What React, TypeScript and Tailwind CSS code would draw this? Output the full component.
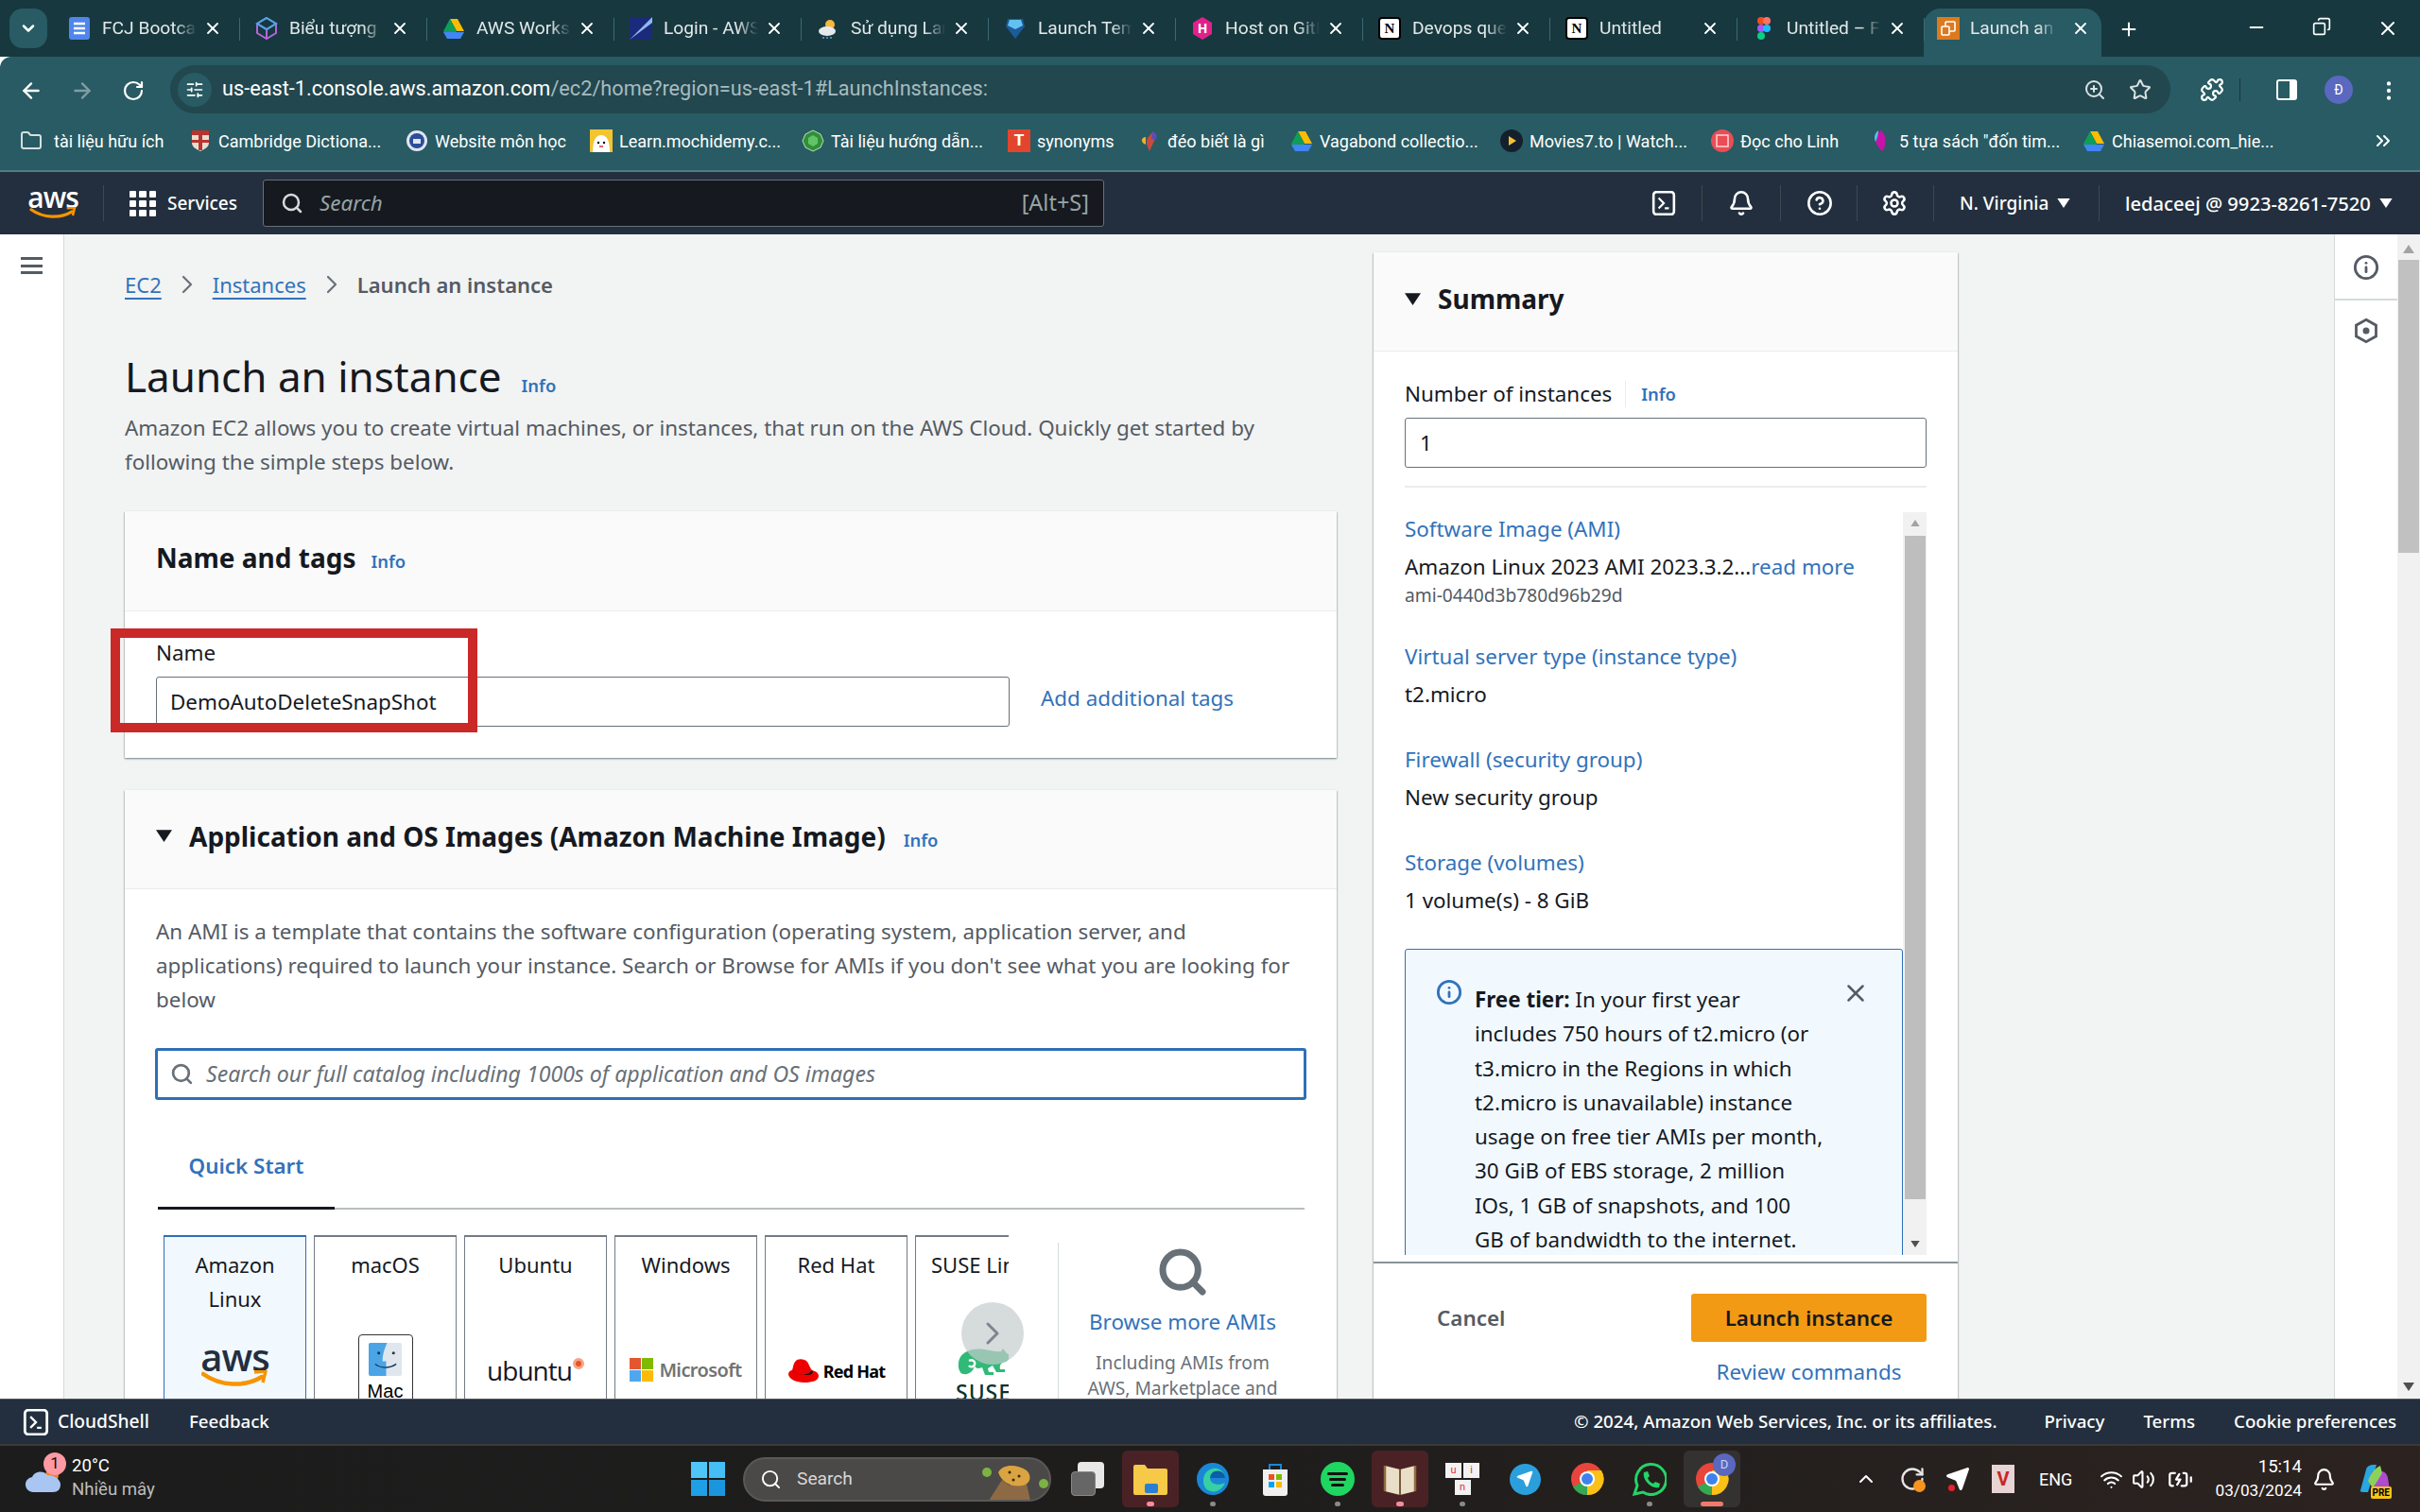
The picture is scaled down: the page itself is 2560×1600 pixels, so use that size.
import React from "react";
import { ArrowLeft, ArrowRight, RotateCw, ZoomIn, Star, Puzzle, MoreVertical, SlidersHorizontal, ChevronRight, ChevronsRight, ChevronDown, Search, X, Plus, Minus, Copy, Bell, Settings, CircleHelp, Info, Folder, ChevronUp, Wifi, Volume2, BatteryCharging, Send } from "lucide-react";

const BLUE = "text-[#3272ba]";

function AwsLogo({ dark, className }: { dark?: boolean; className?: string }) {
  return (
    <span className={`relative inline-flex flex-col items-center ${className ?? ""}`}>
      <span className={`font-['Open_Sans',sans-serif] font-semibold leading-none tracking-[-1px] ${dark ? "text-[#232f3e] text-[40px]" : "text-white text-[30px]"}`}>aws</span>
      <svg viewBox="0 0 70 20" className={dark ? "w-[70px] h-[20px] -mt-[6px]" : "w-[52px] h-[14px] -mt-[5px]"}>
        <path d="M2 4c18 13 44 14 62 3" fill="none" stroke="#f79400" strokeWidth="4.5" strokeLinecap="round" />
        <path d="M56 2l12-1-3 12" fill="none" stroke="#f79400" strokeWidth="3.5" strokeLinejoin="round" />
      </svg>
    </span>
  );
}

function Fav({ k }: { k: string }) {
  const c = "w-[24px] h-[24px] shrink-0";
  switch (k) {
    case "doc":
      return <svg viewBox="0 0 24 24" className={c}><rect x="1" y="0" width="22" height="24" rx="3" fill="#4f86ec" /><path d="M6 7h12M6 12h12M6 17h12" stroke="#fff" strokeWidth="2.4" /></svg>;
    case "box":
      return <svg viewBox="0 0 24 24" className={c}><path d="M12 1l10 6v10l-10 6-10-6V7z M2 7l10 6 10-6M12 13v10" fill="none" stroke="#b565d8" strokeWidth="2" /><path d="M12 1l10 6-10 6-10-6z" fill="none" stroke="#4aa8e8" strokeWidth="2" /></svg>;
    case "drive":
      return <svg viewBox="0 0 24 24" className={c}><path d="M8 2h8l7 13h-8z" fill="#fbbc04" /><path d="M8 2l7 13-4 7H7L1 15z" fill="#0f9d58" /><path d="M1 16h22l-4 7H5z" fill="#4285f4" /></svg>;
    case "login":
      return <svg viewBox="0 0 24 24" className={c}><rect x="0" y="0" width="24" height="24" fill="#1b2a7a" /><path d="M0 24C8 16 16 8 24 0v6C16 12 8 18 0 24z" fill="#8fb8f0" /></svg>;
    case "weather":
      return <svg viewBox="0 0 24 24" className={c}><circle cx="14" cy="8" r="5" fill="#f6b73c" /><ellipse cx="11" cy="15" rx="9" ry="5" fill="#e6e9ec" /><path d="M7 21v2M11 21v2M15 21v2" stroke="#5aa5e0" strokeWidth="1.5" /></svg>;
    case "gem":
      return <svg viewBox="0 0 24 24" className={c}><path d="M4 2h16l2 8-10 13L2 10z" fill="#1c5a9a" /><path d="M6 3h12l2 6-8 4-8-4z" fill="#62c1f0" /></svg>;
    case "hex":
      return <svg viewBox="0 0 24 24" className={c}><path d="M12 0l10 6v12l-10 6-10-6V6z" fill="#e0218a" /><text x="12" y="17" textAnchor="middle" fontSize="14" fontWeight="700" fill="#fff" fontFamily="Open Sans">H</text></svg>;
    case "notion":
      return <span className={`${c} flex items-center justify-center rounded-[4px] bg-white border-2 border-black text-black text-[15px] font-bold font-['Liberation_Serif',serif]`}>N</span>;
    case "figma":
      return <svg viewBox="0 0 16 24" className={c}><circle cx="5" cy="4" r="4" fill="#f24e1e" /><circle cx="11" cy="4" r="4" fill="#ff7262" /><circle cx="5" cy="12" r="4" fill="#a259ff" /><circle cx="11" cy="12" r="4" fill="#1abcfe" /><circle cx="5" cy="20" r="4" fill="#0acf83" /></svg>;
    case "awsorange":
      return <svg viewBox="0 0 24 24" className={c}><rect width="24" height="24" fill="#dd7a1e" /><rect x="9" y="5" width="10" height="10" rx="1" fill="none" stroke="#fff" strokeWidth="1.6" /><rect x="5" y="10" width="8" height="9" rx="1" fill="#dd7a1e" stroke="#fff" strokeWidth="1.6" /></svg>;
    case "cam":
      return <svg viewBox="0 0 24 24" className={c}><path d="M3 1h18v13c0 5-5 7-9 9-4-2-9-4-9-9z" fill="#e8ddd0" /><path d="M3 1h18v5H3zM10 6h4v16h-4zM3 11h18v3H3z" fill="#b8352e" /></svg>;
    case "web":
      return <svg viewBox="0 0 24 24" className={c}><circle cx="12" cy="12" r="11" fill="#dfe6f2" /><circle cx="12" cy="12" r="8" fill="#2b4d9a" /><rect x="8" y="10" width="8" height="5" fill="#dfe6f2" /></svg>;
    case "mochi":
      return <svg viewBox="0 0 24 24" className={c}><rect width="24" height="24" fill="#f4c430" /><path d="M12 6c6 0 9 6 9 18H3C3 12 6 6 12 6z" fill="#fff" /><circle cx="9" cy="14" r="1.2" /><circle cx="15" cy="14" r="1.2" /><path d="M10 18h4" stroke="#d33" strokeWidth="1.5" /></svg>;
    case "emerald":
      return <svg viewBox="0 0 24 24" className={c}><path d="M12 1l8 4 3 7-3 7-8 4-8-4-3-7 3-7z" fill="#2f8f3b" stroke="#bde3b0" /><path d="M12 6l5 3v6l-5 3-5-3V9z" fill="#62c465" /></svg>;
    case "syn":
      return <span className={`${c} flex items-center justify-center bg-[#e2452d] text-white text-[17px] font-extrabold`}>T</span>;
    case "flower":
      return <svg viewBox="0 0 24 24" className={c}><path d="M12 23c-3-6-4-10-2-14l6-7 2 8-6 13z" fill="#c94a3d" /><path d="M8 8C3 8 2 14 8 16z" fill="#e8b32a" /><path d="M15 3c5 0 6 5 3 8l-4-1z" fill="#5b4bc0" /></svg>;
    case "movie":
      return <svg viewBox="0 0 24 24" className={c}><circle cx="12" cy="12" r="12" fill="#15202e" /><path d="M9 7l8 5-8 5z" fill="#f4c430" /></svg>;
    case "linh":
      return <svg viewBox="0 0 24 24" className={c}><circle cx="12" cy="12" r="12" fill="#ea4d55" /><rect x="6" y="6" width="12" height="12" fill="none" stroke="#ffd6d8" strokeWidth="1.5" /></svg>;
    case "book5":
      return <svg viewBox="0 0 24 24" className={c}><path d="M12 1c5 4 6 13 2 22-5-3-8-8-8-13 0-4 2-7 6-9z" fill="#c712a8" /><path d="M9 1C5 4 4 9 6 13c2-4 3-8 3-12z" fill="#4cc3f0" /></svg>;
    default:
      return null;
  }
}

function Tab({ icon, text }: { icon: string; text: string }) {
  return (
    <div className="w-[198px] h-[60px] shrink-0 flex items-center pl-[12px] relative">
      <Fav k={icon} />
      <span className="ml-[12px] w-[100px] overflow-hidden whitespace-nowrap text-[19.2px] text-[#e3e8e9] [mask-image:linear-gradient(90deg,#000_78%,transparent)]">{text}</span>
      <X className="ml-[7px] w-[20px] h-[20px] text-white" strokeWidth={2.2} />
      <span className="absolute right-[4px] top-[19px] w-[1px] h-[24px] bg-[#3b6a72]" />
    </div>
  );
}

const tabs: [string, string][] = [
  ["doc", "FCJ Bootcamp"], ["box", "Biểu tượng"], ["drive", "AWS Workshop"], ["login", "Login - AWS"], ["weather", "Sử dụng Lambda"],
  ["gem", "Launch Template"], ["hex", "Host on GitHub"], ["notion", "Devops quest"], ["notion", "Untitled"], ["figma", "Untitled – Figma"],
];

const marks: [string, string, string][] = [
  ["cam", "Cambridge Dictiona...", "w-[229px]"],
  ["web", "Website môn học", "w-[195px]"],
  ["mochi", "Learn.mochidemy.c...", "w-[224px]"],
  ["emerald", "Tài liệu hướng dẫn...", "w-[218px]"],
  ["syn", "synonyms", "w-[138px]"],
  ["flower", "đéo biết là gì", "w-[161px]"],
  ["drive", "Vagabond collectio...", "w-[222px]"],
  ["movie", "Movies7.to | Watch...", "w-[223px]"],
  ["linh", "Đọc cho Linh", "w-[168px]"],
  ["book5", "5 tựa sách \"đốn tim...", "w-[225px]"],
  ["drive", "Chiasemoi.com_hie...", "w-[240px]"],
];

function NavDiv() {
  return <span className="block w-[1px] h-[38px] bg-[#414750]" />;
}

function CloudShellIcon({ className }: { className?: string }) {
  return (
    <svg viewBox="0 0 24 24" className={className}>
      <rect x="2" y="1" width="20" height="22" rx="3" fill="none" stroke="#fff" strokeWidth="2.4" />
      <path d="M7 7l5 5-5 5M13 17h4" fill="none" stroke="#fff" strokeWidth="2" />
    </svg>
  );
}

function Tri({ className }: { className?: string }) {
  return <svg viewBox="0 0 16 12" className={className}><path d="M0 0h16L8 12z" fill="currentColor" /></svg>;
}

function InfoLink({ className }: { className?: string }) {
  return <span className={`${BLUE} text-[18.4px] font-semibold leading-none ${className ?? ""}`}>Info</span>;
}

function TileLogo({ k }: { k: string }) {
  if (k === "aws") return <AwsLogo dark className="-mt-[1px]" />;
  if (k === "mac")
    return (
      <div className="w-[58px] h-[80px] bg-white border border-[#333] rounded-[4px] flex flex-col items-center pt-[8px] -mt-[5px]">
        <svg viewBox="0 0 36 36" className="w-[37px] h-[35px]">
          <rect width="36" height="36" rx="2" fill="#dfe6ee" />
          <path d="M0 2a2 2 0 012-2h18c-3 7-5 13-5 20h4v16H2a2 2 0 01-2-2z" fill="#4aa4e6" />
          <circle cx="11" cy="11" r="1.6" fill="#12344f" /><circle cx="27" cy="11" r="1.6" fill="#333" />
          <path d="M7 23c6 5 16 5 23 0" fill="none" stroke="#12344f" strokeWidth="1.3" />
        </svg>
        <span className="text-[20px] font-medium font-['Liberation_Sans',sans-serif] text-black leading-[24px] mt-[4px]">Mac</span>
      </div>
    );
  if (k === "ubuntu")
    return (
      <div className="flex items-start mt-[17px]">
        <span className="font-['Open_Sans',sans-serif] text-[28px] leading-[32px] text-[#16191f] tracking-[-1px]">ubuntu</span>
        <span className="ml-[1px] w-[12px] h-[12px] rounded-full bg-[#e95420] mt-[3px] border-[3px] border-[#f3a58a]" />
      </div>
    );
  if (k === "ms")
    return (
      <div className="flex items-center gap-[6px] mt-[20px]">
        <span className="grid grid-cols-2 gap-[1px] w-[25px] h-[25px]">
          <span className="bg-[#e4572e]" /><span className="bg-[#7fba00]" /><span className="bg-[#4fa8ef]" /><span className="bg-[#fbbc09]" />
        </span>
        <span className="text-[20px] text-[#737373] font-semibold tracking-[-0.6px] leading-none">Microsoft</span>
      </div>
    );
  if (k === "rh")
    return (
      <div className="flex items-center gap-[4px] mt-[21px]">
        <svg viewBox="0 0 34 26" className="w-[34px] h-[26px]">
          <path d="M8 3c3-4 10-3 13 0 2 3 3 7 5 9 4 1 7 3 7 6 0 5-7 7-15 7C9 25 1 21 1 16c0-2 2-4 4-4 1-3 1-6 3-9z" fill="#e00" />
          <path d="M5 12c6 5 16 7 21 0 2 2 0 5-4 5-6 0-13-2-17-5z" fill="#111" />
        </svg>
        <span className="text-[18px] font-bold tracking-[-0.8px] text-black leading-none">Red Hat</span>
      </div>
    );
  if (k === "suse")
    return (
      <div className="flex flex-col items-start mt-[10px] ml-[42px] w-[100px]">
        <svg viewBox="0 0 60 30" className="w-[60px] h-[30px]">
          <path d="M3 15C4 5 15-1 30 1c8 1 14 3 18 2l2-3 3 4 6 5-6 5c-5 1-7 3-6 8h5v3h-9l-4-7-5 3 1 4h5v3h-9l-3-8c-5 2-7 1-8-2-1 5-5 10-12 9C5 27 2 21 3 15z" fill="#30ba78" />
          <path d="M14 13c4-2 7 1 6 4s-5 3-6 1" fill="none" stroke="#fff" strokeWidth="2.4" />
        </svg>
        <span className="text-[23px] font-medium text-[#0c322c] leading-[26px] mt-[3px] tracking-[1px]">SUSE</span>
      </div>
    );
  return null;
}

const tiles: [string, string, string][] = [
  ["Amazon Linux", "aws", "sel"],
  ["macOS", "mac", ""],
  ["Ubuntu", "ubuntu", ""],
  ["Windows", "ms", ""],
  ["Red Hat", "rh", ""],
  ["SUSE Linux", "suse", "cut"],
];

function Tile({ label, logo, sel, cut }: { label: string; logo: string; sel?: boolean; cut?: boolean }) {
  return (
    <div className={`w-[151px] h-[220px] shrink-0 border-t-2 border-l border-r flex flex-col ${sel ? "border-[#2f6fb8] bg-[#f1f9ff]" : "border-[#737b84] bg-white"} ${cut ? "items-start" : "items-center"}`}>
      <div className={`h-[108px] pt-[11px] text-[22px] leading-[36px] text-[#16191f] w-full ${cut ? "pl-[16px] whitespace-nowrap" : "text-center px-[14px]"}`}>{label}</div>
      <TileLogo k={logo} />
    </div>
  );
}

function Card({ children, className }: { children: React.ReactNode; className?: string }) {
  return <div className={`bg-white shadow-[0_1px_2px_rgba(0,28,36,0.4),1px_1px_1px_rgba(0,28,36,0.08),-1px_1px_1px_rgba(0,28,36,0.08)] ${className ?? ""}`}>{children}</div>;
}

function SumLink({ t, v, sub, className }: { t: string; v: React.ReactNode; sub?: string; className?: string }) {
  return (
    <div className={className}>
      <div className={`${BLUE} h-[36px] leading-[36px] text-[22.4px]`}>{t}</div>
      <div className="h-[36px] mt-[4px] leading-[36px] text-[22.4px] text-[#16191f] whitespace-nowrap">{v}</div>
      {sub && <div className="h-[26px] -mt-[1px] leading-[26px] text-[19.2px] text-[#545b64]">{sub}</div>}
    </div>
  );
}

function TaskSlot({ children, tile, dot }: { children?: React.ReactNode; tile?: string; dot?: string }) {
  return (
    <div className="w-[66px] h-[70px] shrink-0 flex items-center justify-center relative">
      {tile && <span className={`absolute left-[3px] right-[3px] top-[5px] bottom-[5px] rounded-[6px] ${tile}`} />}
      <span className="relative flex items-center justify-center">{children}</span>
      {dot && <span className={`absolute bottom-[6px] left-1/2 -translate-x-1/2 h-[5px] rounded-full ${dot}`} />}
    </div>
  );
}

export default function App() {
  return (
    <div className="w-[2560px] h-[1600px] flex flex-col overflow-hidden font-['Noto_Sans',sans-serif] bg-white">
      {/* tab strip */}
      <div className="h-[60px] shrink-0 bg-[#17383f] flex pl-[10px] items-stretch font-['Roboto',sans-serif]">
        <div className="w-[40px] h-[42px] mt-[9px] rounded-[14px] bg-[#285b63] flex items-center justify-center mr-[10px] shrink-0">
          <ChevronDown className="w-[20px] h-[20px] text-white" strokeWidth={3} />
        </div>
        {tabs.map(([k, t], i) => <Tab key={i} icon={k} text={t} />)}
        <div className="w-[188px] h-[51px] mt-[9px] -ml-[5px] rounded-t-[18px] bg-[#285b63] flex items-center pl-[14px] pb-[9px] shrink-0">
          <Fav k="awsorange" />
          <span className="ml-[11px] w-[92px] overflow-hidden whitespace-nowrap text-[19.2px] text-[#e3e8e9] [mask-image:linear-gradient(90deg,#000_78%,transparent)]">Launch an instance</span>
          <X className="ml-[15px] w-[20px] h-[20px] text-white" strokeWidth={2.2} />
        </div>
        <Plus className="ml-[18px] mt-[20px] w-[22px] h-[22px] text-white" strokeWidth={2.2} />
        <div className="ml-auto flex items-start pt-[18px] pr-[22px] gap-[48px]">
          <Minus className="w-[22px] h-[22px] text-white" />
          <Copy className="w-[20px] h-[20px] text-white scale-x-[-1]" />
          <X className="w-[24px] h-[24px] text-white" />
        </div>
      </div>
      {/* toolbar */}
      <div className="h-[60px] shrink-0 bg-[#285b63] flex items-start pl-[20px] rounded-tl-[12px] font-['Roboto',sans-serif]">
        <ArrowLeft className="w-[26px] h-[26px] mt-[23px] text-white" strokeWidth={2.2} />
        <ArrowRight className="ml-[28px] w-[26px] h-[26px] mt-[23px] text-[#7f9ea3]" strokeWidth={2.2} />
        <RotateCw className="ml-[29px] w-[24px] h-[24px] mt-[24px] text-white" strokeWidth={2.2} />
        <div className="ml-[27px] mt-[9px] w-[2116px] h-[51px] rounded-full bg-[#23474e] flex items-center pl-[8px] pr-[20px]">
          <span className="w-[36px] h-[36px] rounded-full bg-[#285b63] flex items-center justify-center">
            <SlidersHorizontal className="w-[20px] h-[20px] text-white" />
          </span>
          <span className="ml-[11px] text-[21.7px] text-white whitespace-nowrap">us-east-1.console.aws.amazon.com<span className="text-[#a6bcc0]">/ec2/home?region=us-east-1#LaunchInstances:</span></span>
          <ZoomIn className="ml-auto w-[24px] h-[24px] text-[#d9e2e4]" />
          <Star className="ml-[24px] w-[24px] h-[24px] text-[#d9e2e4]" />
        </div>
        <Puzzle className="ml-[31px] mt-[22px] w-[26px] h-[26px] text-white" strokeWidth={2} />
        <span className="ml-[16px] mt-[23px] w-[1px] h-[24px] bg-[#17383f]" />
        <span className="ml-[38px] mt-[24px] w-[22px] h-[22px] rounded-[3px] border-[2.5px] border-white border-r-[8px]" />
        <span className="ml-[29px] mt-[20px] w-[30px] h-[30px] rounded-full bg-[#5a68c0] text-white text-[14px] flex items-center justify-center">Đ</span>
        <MoreVertical className="ml-[25px] mt-[23px] w-[26px] h-[26px] text-white" />
      </div>
      {/* bookmarks */}
      <div className="h-[62px] shrink-0 bg-[#285b63] border-b-2 border-[#4d7d84] flex items-center pl-[20px] pb-[2px] font-['Roboto',sans-serif]">
        <div className="w-[180px] shrink-0 flex items-center">
          <Folder className="w-[26px] h-[24px] text-[#d5dfe1]" />
          <span className="ml-[11px] text-[18px] text-white whitespace-nowrap">tài liệu hữu ích</span>
        </div>
        {marks.map(([k, t, w], i) => (
          <div key={i} className={`${w} shrink-0 flex items-center`}>
            <Fav k={k} />
            <span className="ml-[7px] text-[18px] text-white whitespace-nowrap">{t}</span>
          </div>
        ))}
        <ChevronsRight className="ml-[66px] w-[24px] h-[24px] text-white" />
      </div>
      {/* aws nav */}
      <div className="h-[66px] shrink-0 bg-[#232f3e] flex items-center pl-[30px] relative">
        <AwsLogo className="w-[52px] -mt-[4px]" />
        <span className="ml-[27px] mr-[27px] w-[1px] h-[38px] bg-[#414750]" />
        <span className="grid grid-cols-3 gap-[3px] w-[28px]">
          {Array.from({ length: 9 }).map((_, i) => <span key={i} className="h-[7px] bg-white rounded-[1px]" />)}
        </span>
        <span className="ml-[12px] w-[74px] text-[19px] font-medium text-white whitespace-nowrap">Services</span>
        <div className="ml-[27px] w-[890px] h-[50px] bg-[#16191f] border border-[#687078] rounded-[3px] flex items-center pl-[18px] pr-[15px]">
          <Search className="w-[24px] h-[24px] text-[#d5dbdb]" strokeWidth={2.5} />
          <span className="ml-[17px] italic text-[22.4px] text-[#95a5a6]">Search</span>
          <span className="ml-auto text-[23.5px] text-[#95a5a6]">[Alt+S]</span>
        </div>
        <div className="ml-auto flex items-center pr-[29px]">
          <CloudShellIcon className="w-[26px] h-[26px]" />
          <span className="ml-[27px]"><NavDiv /></span>
          <Bell className="ml-[27px] w-[28px] h-[28px] text-white" strokeWidth={2.2} />
          <span className="ml-[27px]"><NavDiv /></span>
          <CircleHelp className="ml-[27px] w-[28px] h-[28px] text-white" strokeWidth={2.2} />
          <span className="ml-[25px]"><NavDiv /></span>
          <Settings className="ml-[25px] w-[28px] h-[28px] text-white" strokeWidth={2.2} />
          <span className="ml-[27px]"><NavDiv /></span>
          <span className="ml-[27px] w-[93px] text-[19px] font-medium text-white whitespace-nowrap">N. Virginia</span>
          <Tri className="ml-[10px] w-[14px] h-[10px] text-white" />
          <span className="ml-[30px]"><NavDiv /></span>
          <span className="ml-[27px] w-[260px] text-[20.2px] font-medium text-white whitespace-nowrap">ledaceej @ 9923-8261-7520</span>
          <Tri className="ml-[9px] w-[14px] h-[10px] text-white" />
        </div>
      </div>
      {/* body */}
      <div className="flex-1 min-h-0 flex bg-[#f2f3f3] overflow-hidden">
        <div className="w-[68px] shrink-0 bg-white border-r border-[#d5dbdb] pt-[24px] pl-[22px]">
          <div className="w-[23px] h-[18px] border-t-[3px] border-b-[3px] border-[#545b64] flex items-center"><span className="w-full h-[3px] bg-[#545b64]" /></div>
        </div>
        {/* main column */}
        <div className="w-[1346px] shrink-0 pl-[64px]">
          <div className="mt-[35px] h-[36px] flex items-center text-[22px]">
            <span className={`${BLUE} underline underline-offset-[5px]`}>EC2</span>
            <ChevronRight className="mx-[11px] w-[32px] h-[32px] text-[#687078]" strokeWidth={1.6} />
            <span className={`${BLUE} underline underline-offset-[5px]`}>Instances</span>
            <ChevronRight className="mx-[11px] w-[32px] h-[32px] text-[#687078]" strokeWidth={1.6} />
            <span className="font-semibold text-[22px] text-[#545b64]">Launch an instance</span>
          </div>
          <div className="mt-[49px] h-[60px] flex items-baseline">
            <span className="text-[44px] leading-[60px] text-[#16191f]">Launch an instance</span>
            <InfoLink className="ml-[21px]" />
          </div>
          <p className="mt-[7px] w-[1240px] text-[22.4px] leading-[36px] text-[#545b64]">Amazon EC2 allows you to create virtual machines, or instances, that run on the AWS Cloud. Quickly get started by following the simple steps below.</p>
          <Card className="mt-[34px] w-[1282px] relative">
            <div className="h-[106px] bg-[#fafafa] border-b border-[#eaeded] pl-[33px] pt-[29px] flex items-baseline">
              <span className="text-[28px] font-bold leading-[40px] text-[#16191f]">Name and tags</span>
              <InfoLink className="ml-[16px]" />
            </div>
            <div className="pl-[33px] pt-[28px] pb-[33px]">
              <div className="h-[32px] leading-[32px] text-[22.4px] text-[#16191f]">Name</div>
              <div className="mt-[9px] flex items-center">
                <div className="w-[903px] h-[53px] border border-[#687078] rounded-[3px] pl-[14px] flex items-center text-[22.4px] text-[#16191f]">DemoAutoDeleteSnapShot</div>
                <span className={`ml-[33px] -mt-[8px] text-[22.4px] ${BLUE}`}>Add additional tags</span>
              </div>
            </div>
            <div className="absolute left-[-15px] top-[124px] w-[388px] h-[110px] border-[10px] border-[#cb2828]" />
          </Card>
          <Card className="mt-[34px] w-[1282px]">
            <div className="h-[105px] bg-[#fafafa] border-b border-[#eaeded] pl-[33px] pb-[7px] flex items-center">
              <Tri className="w-[17px] h-[13px] text-[#16191f]" />
              <div className="ml-[18px] flex items-baseline">
                <span className="text-[28px] font-bold leading-[40px] text-[#16191f]">Application and OS Images (Amazon Machine Image)</span>
                <InfoLink className="ml-[19px]" />
              </div>
            </div>
            <div className="pl-[32px] pt-[27px]">
              <p className="w-[1230px] pl-[1px] text-[22.4px] leading-[36px] text-[#545b64]">An AMI is a template that contains the software configuration (operating system, application server, and applications) required to launch your instance. Search or Browse for AMIs if you don't see what you are looking for below</p>
              <div className="mt-[33px] w-[1218px] h-[55px] border-[3px] border-[#2f6fb8] rounded-[3px] flex items-center pl-[13px]">
                <Search className="w-[25px] h-[25px] text-[#687078]" strokeWidth={2.6} />
                <span className="ml-[13px] italic text-[23.1px] text-[#687078]">Search our full catalog including 1000s of application and OS images</span>
              </div>
              <div className="ml-[3px] mt-[48px] w-[1213px] h-[68px] border-b-2 border-[#b8bdbe] flex">
                <div className={`w-[187px] h-[68px] text-center border-b-[3px] border-[#16191f] text-[22.4px] font-semibold ${BLUE} leading-[44px]`}>Quick Start</div>
              </div>
              <div className="relative ml-[9px] mt-[27px] flex items-start">
                <div className="w-[894px] flex gap-[8px] overflow-hidden">
                  {tiles.map(([l, k, s], i) => <Tile key={i} label={l} logo={k} sel={s === "sel"} cut={s === "cut"} />)}
                </div>
                <span className="absolute left-[844px] top-[71px] w-[66px] h-[66px] rounded-full bg-[#c4cccc]/70 flex items-center justify-center">
                  <ChevronRight className="w-[40px] h-[40px] text-[#7d8590]" strokeWidth={1.8} />
                </span>
                <div className="ml-[52px] mt-[8px] w-[263px] h-[220px] border-l border-[#d5dbdb] flex flex-col items-center text-center">
                  <Search className="w-[56px] h-[56px] mt-[3px] text-[#687078]" strokeWidth={3} />
                  <span className={`${BLUE} mt-[7px] text-[22.4px] leading-[36px]`}>Browse more AMIs</span>
                  <span className="mt-[11px] w-[220px] text-[19.2px] leading-[27px] text-[#687078]">Including AMIs from AWS, Marketplace and the Community</span>
                </div>
              </div>
            </div>
          </Card>
        </div>
        {/* summary */}
        <div className="ml-[39px] mt-[19px] w-[618px] h-[1240px] shrink-0">
          <Card className="h-[1240px] flex flex-col">
            <div className="h-[105px] shrink-0 bg-[#fafafa] border-b border-[#eaeded] pl-[33px] pb-[6px] flex items-center">
              <Tri className="w-[17px] h-[13px] text-[#16191f]" />
              <span className="ml-[18px] text-[28px] font-bold leading-[40px] text-[#16191f]">Summary</span>
            </div>
            <div className="px-[33px] shrink-0">
              <div className="mt-[29px] h-[32px] flex items-center text-[22.4px] text-[#16191f]">
                Number of instances
                <span className="ml-[14px] h-[28px] border-l border-[#eaeded]" />
                <span className={`ml-[16px] text-[18.4px] font-semibold ${BLUE}`}>Info</span>
              </div>
              <div className="mt-[9px] h-[53px] border border-[#687078] rounded-[3px] pl-[15px] flex items-center text-[22.4px] text-[#16191f]">1</div>
              <div className="mt-[19px] border-t-2 border-[#eaeded]" />
            </div>
            <div className="mx-[33px] mt-[26px] h-[786px] shrink-0 flex overflow-hidden">
              <div className="w-[527px] shrink-0">
                <SumLink t="Software Image (AMI)" v={<>Amazon Linux 2023 AMI 2023.3.2...<span className={BLUE}>read more</span></>} sub="ami-0440d3b780d96b29d" />
                <SumLink t="Virtual server type (instance type)" className="mt-[34px]" v="t2.micro" />
                <SumLink t="Firewall (security group)" className="mt-[33px]" v="New security group" />
                <SumLink t="Storage (volumes)" className="mt-[33px]" v="1 volume(s) - 8 GiB" />
                <div className="mt-[33px] relative w-[527px] h-[420px] bg-[#f1f9ff] border border-[#2f6fb8] rounded-[3px] pt-[35px] pl-[73px] text-[22.4px] leading-[36.3px] text-[#16191f]">
                  <Info className={`absolute left-[32px] top-[31px] w-[28px] h-[28px] ${BLUE}`} strokeWidth={2.4} />
                  <X className="absolute right-[34px] top-[31px] w-[30px] h-[30px] text-[#545b64]" strokeWidth={2} />
                  <p className="whitespace-nowrap">
                    <b className="font-bold">Free tier:</b> In your first year<br />
                    includes 750 hours of t2.micro (or<br />
                    t3.micro in the Regions in which<br />
                    t2.micro is unavailable) instance<br />
                    usage on free tier AMIs per month,<br />
                    30 GiB of EBS storage, 2 million<br />
                    IOs, 1 GB of snapshots, and 100<br />
                    GB of bandwidth to the internet.
                  </p>
                </div>
              </div>
              <div className="w-[25px] shrink-0 bg-[#f1f1f1] flex flex-col items-center">
                <Tri className="mt-[8px] w-[10px] h-[7px] text-[#a3a3a3] rotate-180" />
                <div className="mt-[10px] w-[22px] h-[702px] bg-[#bebebe]" />
                <Tri className="mt-[44px] w-[10px] h-[7px] text-[#505050]" />
              </div>
            </div>
            <div className="h-[2px] shrink-0 mt-[7px] bg-[#8a9399]" />
            <div className="flex-1 relative pr-[33px] pl-[67px] flex">
              <span className="mt-[40px] text-[22.4px] leading-[36px] font-semibold text-[#545b64]">Cancel</span>
              <div className="ml-auto flex flex-col items-center">
                <div className="mt-[32px] w-[249px] h-[51px] rounded-[3px] bg-[#f29a14] flex items-center justify-center text-[22.4px] font-semibold text-[#16191f]">Launch instance</div>
                <span className={`mt-[14px] text-[22.4px] leading-[36px] ${BLUE}`}>Review commands</span>
              </div>
            </div>
          </Card>
        </div>
        {/* right rail */}
        <div className="ml-auto w-[67px] shrink-0 bg-white border-l border-[#d5dbdb] flex flex-col items-center">
          <Info className="mt-[21px] w-[28px] h-[28px] text-[#545b64]" strokeWidth={2.4} />
          <span className="mt-[19px] w-full border-t-2 border-[#d5dbdb]" />
          <svg viewBox="0 0 24 24" className="mt-[18px] w-[28px] h-[28px] text-[#545b64]"><path d="M12 2l9 5v10l-9 5-9-5V7z" fill="none" stroke="currentColor" strokeWidth="2.4" /><circle cx="12" cy="12" r="3" fill="currentColor" /></svg>
        </div>
        <div className="w-[24px] shrink-0 bg-[#f1f1f1] flex flex-col items-center">
          <Tri className="mt-[11px] w-[14px] h-[9px] text-[#a3a3a3] rotate-180" />
          <div className="mt-[7px] w-[22px] h-[310px] bg-[#c1c1c1]" />
          <Tri className="mt-auto mb-[8px] w-[14px] h-[9px] text-[#505050]" />
        </div>
      </div>
      {/* footer */}
      <div className="h-[48px] shrink-0 bg-[#232f3e] border-t border-[#545b64] flex items-center pl-[24px] pr-[25px] text-[18.7px] font-medium text-white">
        <CloudShellIcon className="w-[28px] h-[28px]" />
        <span className="ml-[9px] text-[19.2px]">CloudShell</span>
        <span className="ml-[42px]">Feedback</span>
        <span className="ml-auto">© 2024, Amazon Web Services, Inc. or its affiliates.</span>
        <span className="ml-[50px]">Privacy</span>
        <span className="ml-[41px]">Terms</span>
        <span className="ml-[41px]">Cookie preferences</span>
      </div>
      {/* taskbar */}
      <div className="h-[72px] shrink-0 bg-[linear-gradient(90deg,#1c1c1c_0%,#1e1d1c_50%,#2c2320_100%)] border-t-2 border-[#3a3a3a] flex items-center relative font-['Roboto',sans-serif]">
        <div className="w-[76px] shrink-0 h-full relative">
          <svg viewBox="0 0 40 26" className="absolute left-[27px] top-[24px] w-[40px] h-[26px]">
            <circle cx="28" cy="7" r="7" fill="#f4821f" />
            <path d="M9 25a8 8 0 01-2-16c2-6 12-8 16-2 7 0 14 4 14 10 0 5-3 8-8 8z" fill="#a9c6f2" />
          </svg>
          <span className="absolute left-[46px] top-[7px] w-[24px] h-[24px] rounded-full bg-[#ff99a4] text-[#111] text-[17px] flex items-center justify-center">1</span>
        </div>
        <div className="w-[655px] shrink-0 flex flex-col leading-[25px] text-[18.6px] -mt-[3px]">
          <span className="text-white">20°C</span>
          <span className="text-[#bdbdbd]">Nhiều mây</span>
        </div>
        <span className="grid grid-cols-2 gap-[2px] w-[36px] h-[36px]">
          <span className="bg-[#4fc6f7]" /><span className="bg-[#45bdf5]" /><span className="bg-[#1f9fe6]" /><span className="bg-[#1b96de]" />
        </span>
        <div className="ml-[19px] w-[326px] h-[47px] rounded-full bg-[#4a4947] border-2 border-[#5a5957] flex items-center pl-[16px] relative overflow-hidden">
          <Search className="w-[23px] h-[23px] text-white" strokeWidth={2} />
          <span className="ml-[16px] text-[19.2px] text-[#d8d8d8]">Search</span>
          <svg viewBox="0 0 74 44" className="absolute right-0 top-0 w-[74px] h-[44px]">
            <path d="M10 44l14-22 8 6 6-20 12 18 4 18z" fill="#8d6a45" />
            <path d="M20 14c4-8 18-10 30-2 6 6 4 14-4 16-10 2-22-2-26-14z" fill="#d9a441" />
            <circle cx="32" cy="14" r="1.5" fill="#3a2510" /><circle cx="42" cy="18" r="1.5" fill="#3a2510" /><circle cx="36" cy="22" r="1.5" fill="#3a2510" />
            <circle cx="8" cy="14" r="5" fill="#7cb342" /><circle cx="68" cy="26" r="5" fill="#7cb342" />
          </svg>
        </div>
        <div className="ml-[6px] flex">
          <TaskSlot>
            <span className="relative w-[36px] h-[36px]">
              <span className="absolute right-[1px] top-0 w-[28px] h-[28px] rounded-[4px] bg-[#e8e8e8]" />
              <span className="absolute left-0 bottom-0 w-[26px] h-[26px] rounded-[4px] bg-[#666] border border-[#888]" />
            </span>
          </TaskSlot>
          <TaskSlot tile="bg-[#4a2226]" dot="w-[8px] bg-[#f78d9c]">
            <svg viewBox="0 0 36 34" className="w-[36px] h-[34px]"><path d="M0 4a2 2 0 012-2h10l3 4h19a2 2 0 012 2v24a2 2 0 01-2 2H2a2 2 0 01-2-2z" fill="#f7c948" /><rect x="12" y="22" width="14" height="10" rx="2" fill="#2a7fd5" /></svg>
          </TaskSlot>
          <TaskSlot dot="w-[6px] bg-[#8a8a8a]">
            <svg viewBox="0 0 36 36" className="w-[36px] h-[36px]"><circle cx="18" cy="18" r="17" fill="#1a87d6" /><path d="M8 20c0-9 7-14 14-13 6 1 9 6 9 10H15c0 6 8 9 16 5-3 7-9 11-15 9C11 30 8 26 8 20z" fill="#35d1a3" /><path d="M15 17h16c0-5-5-9-11-7-3 1-5 4-5 7z" fill="#0c5ea8" /></svg>
          </TaskSlot>
          <TaskSlot>
            <svg viewBox="0 0 30 36" className="w-[30px] h-[36px]"><path d="M2 8h26v25a3 3 0 01-3 3H5a3 3 0 01-3-3z" fill="#f0f0f0" /><path d="M9 8V3h12v5" fill="none" stroke="#1a87d6" strokeWidth="2" /><rect x="8" y="13" width="6" height="6" fill="#f25022" /><rect x="16" y="13" width="6" height="6" fill="#7fba00" /><rect x="8" y="21" width="6" height="6" fill="#00a4ef" /><rect x="16" y="21" width="6" height="6" fill="#ffb900" /></svg>
          </TaskSlot>
          <TaskSlot dot="w-[6px] bg-[#8a8a8a]">
            <span className="w-[36px] h-[36px] rounded-full bg-[#1ed760] flex flex-col items-center justify-center gap-[3px]">
              <span className="w-[22px] h-[3px] rounded-full bg-[#111]" /><span className="w-[18px] h-[3px] rounded-full bg-[#111]" /><span className="w-[14px] h-[3px] rounded-full bg-[#111]" />
            </span>
          </TaskSlot>
          <TaskSlot tile="bg-[#4a2226]" dot="w-[8px] bg-[#f78d9c]">
            <svg viewBox="0 0 36 36" className="w-[36px] h-[36px]"><path d="M2 4l16 4 16-4v27l-16 4-16-4z" fill="#e9dfc9" /><path d="M18 8v27" stroke="#7a5a36" strokeWidth="2" /><path d="M2 4v27M34 4v27" stroke="#8f6c3f" strokeWidth="2.5" /></svg>
          </TaskSlot>
          <TaskSlot dot="w-[6px] bg-[#8a8a8a]">
            <span className="grid grid-cols-2 gap-[2px] w-[36px]">
              <span className="h-[16px] bg-[#f2f2f2] text-[#d33] text-[11px] leading-[16px] text-center">u</span>
              <span className="h-[16px] bg-[#f2f2f2] text-[#d33] text-[11px] leading-[16px] text-center">i</span>
              <span className="h-[16px] col-span-2 mx-auto w-[17px] bg-[#f2f2f2] text-[#d33] text-[11px] leading-[16px] text-center">n</span>
            </span>
          </TaskSlot>
          <TaskSlot>
            <span className="w-[33px] h-[33px] rounded-full bg-[#2b9fdc] flex items-center justify-center"><Send className="w-[18px] h-[18px] text-white fill-white" /></span>
          </TaskSlot>
          <TaskSlot>
            <svg viewBox="0 0 36 36" className="w-[36px] h-[36px]"><circle cx="18" cy="18" r="17" fill="#e8453c" /><path d="M18 18L3 26.5A17 17 0 0018 35z" fill="#34a853" /><path d="M18 18l0 17a17 17 0 0015-26H18z" fill="#fbc116" /><circle cx="18" cy="18" r="8" fill="#fff" /><circle cx="18" cy="18" r="6" fill="#3f82ee" /></svg>
          </TaskSlot>
          <TaskSlot dot="w-[6px] bg-[#8a8a8a]">
            <svg viewBox="0 0 36 36" className="w-[36px] h-[36px]"><path d="M2 34l3-9A16 16 0 1111 32z" fill="none" stroke="#25d366" strokeWidth="3" /><path d="M12 11l4-1 2 5-2 2c1 3 3 5 6 6l2-2 5 2-1 4c-8 2-18-8-16-16z" fill="#25d366" /></svg>
          </TaskSlot>
          <TaskSlot tile="bg-[#333230]" dot="w-[24px] bg-[#f2796a]">
            <svg viewBox="0 0 36 36" className="w-[36px] h-[36px]"><circle cx="18" cy="18" r="17" fill="#e8453c" /><path d="M18 18L3 26.5A17 17 0 0018 35z" fill="#34a853" /><path d="M18 18l0 17a17 17 0 0015-26H18z" fill="#fbc116" /><circle cx="18" cy="18" r="8" fill="#fff" /><circle cx="18" cy="18" r="6" fill="#3f82ee" /></svg>
            <span className="absolute -right-[7px] -top-[9px] w-[24px] h-[24px] rounded-full bg-[#5a68c0] text-[#cdd3f5] text-[13px] flex items-center justify-center">D</span>
          </TaskSlot>
        </div>
        <div className="ml-[118px] flex items-center text-white">
          <ChevronUp className="w-[24px] h-[24px]" />
          <span className="ml-[23px] relative w-[28px] h-[28px]">
            <RotateCw className="w-[28px] h-[28px] text-[#e6e6e6]" />
            <span className="absolute right-0 bottom-0 w-[13px] h-[13px] rounded-full bg-[#f7941d]" />
          </span>
          <span className="ml-[21px] relative w-[26px] h-[26px]">
            <Send className="w-[26px] h-[26px] fill-white" />
            <span className="absolute left-[3px] bottom-0 w-[7px] h-[7px] rounded-full bg-[#e5232b]" />
          </span>
          <span className="ml-[23px] w-[24px] h-[30px] bg-[#e8d4d4] text-[#c62828] font-bold text-[20px] flex items-center justify-center leading-none">V</span>
          <span className="ml-[26px] w-[38px] text-[18px]">ENG</span>
          <Wifi className="ml-[26px] w-[25px] h-[25px]" />
          <Volume2 className="ml-[9px] w-[25px] h-[25px]" />
          <BatteryCharging className="ml-[13px] w-[27px] h-[27px]" />
          <div className="ml-[11px] w-[104px] flex flex-col items-end leading-[25px] whitespace-nowrap">
            <span className="text-[18.6px]">15:14</span>
            <span className="text-[17.2px]">03/03/2024</span>
          </div>
          <Bell className="ml-[11px] w-[25px] h-[25px]" />
          <div className="ml-[22px] relative w-[36px] h-[36px]">
            <svg viewBox="0 0 36 36" className="w-[36px] h-[36px]"><path d="M4 30L10 8c1-4 5-5 8-5h3L12 32H7c-2 0-4-1-3-2z" fill="#28a7e0" /><path d="M16 10h10c4 0 6 3 7 7l2 13c0 3-3 3-5 3H20z" fill="#b04ad0" /><path d="M12 20c3-8 8-14 13-16l2 8-10 16z" fill="#8cd25a" /></svg>
            <span className="absolute -right-[1px] -bottom-[3px] bg-[#f5c518] text-black text-[10px] font-bold px-[2px] leading-[13px] rounded-[2px]">PRE</span>
          </div>
        </div>
      </div>
    </div>
  );
}
